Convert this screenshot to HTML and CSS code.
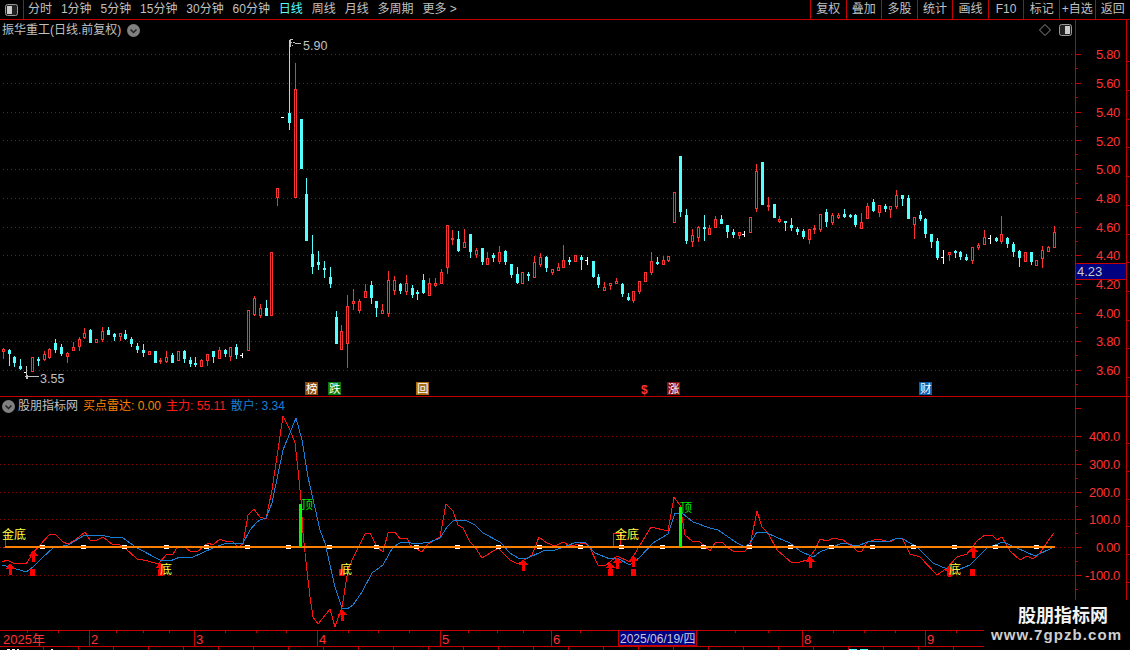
FILE: index.html
```html
<!DOCTYPE html>
<html lang="zh-CN">
<head>
<meta charset="utf-8">
<title>振华重工</title>
<link rel="stylesheet" href="styles.css">
</head>
<body>
<div class="app">
  <header class="toolbar">
    <div class="layout-btn"><svg class="panel-icon" width="13" height="12" viewBox="0 0 13 12"><rect x="0.5" y="0.5" width="12" height="11" rx="2" class="pi-frame"/><rect x="2" y="2" width="5" height="8" class="pi-fill"/></svg></div>
    <nav class="periods">
      <span>分时</span><span>1分钟</span><span>5分钟</span><span>15分钟</span><span>30分钟</span><span>60分钟</span><span class="active">日线</span><span>周线</span><span>月线</span><span>多周期</span><span>更多 &gt;</span>
    </nav>
    <div class="actions">
      <span>复权</span><span>叠加</span><span>多股</span><span>统计</span><span>画线</span><span>F10</span><span>标记</span><span>+自选</span><span>返回</span>
    </div>
  </header>

  <section class="pane pane-main">
    <div class="plot">
      <svg id="mainPlot" class="chart" width="1075" height="376" viewBox="0 20 1075 376">
        <g id="mainGrid"></g>
        <g id="candles"></g>
        <path class="hl-mark" d="M290.5 47V39.500H293M290.500 42.500H292M293 42l3 1.500 3-.5 2 1M291.500 45.500h1"/>
        <text class="hl-text" x="303" y="50">5.90</text>
        <path class="hl-mark" d="M26.500 366V378.500M26.500 376.500h12M28 375l-2 1.500 2 2"/>
        <text class="hl-text" x="40" y="383">3.55</text>
        <g class="tags">
          <rect x="305" y="382" width="13" height="13" class="tag-brown"/><text x="306" y="393">榜</text>
          <rect x="328" y="382" width="13" height="13" class="tag-green"/><text x="329" y="393">跌</text>
          <rect x="416" y="382" width="13" height="13" class="tag-amber"/><text x="417" y="393">回</text>
          <text x="641" y="394" class="tag-dollar">$</text>
          <rect x="667" y="382" width="13" height="13" class="tag-red"/><text x="668" y="393">涨</text>
          <rect x="919" y="382" width="13" height="13" class="tag-blue"/><text x="920" y="393">财</text>
        </g>
      </svg>
      <div class="pane-title">
        <span class="stock">振华重工(日线.前复权)</span>
        <svg class="chev" width="13" height="13" viewBox="0 0 13 13"><circle cx="6.500" cy="6.500" r="6.500"/><path d="M3.500 5.500l3 3 3-3"/></svg>
      </div>
      <div class="pane-tools">
        <svg class="diamond" width="12" height="12" viewBox="0 0 12 12"><path d="M6 .5L11.500 6 6 11.500 .5 6z"/></svg>
        <svg class="panel-icon" width="13" height="12" viewBox="0 0 13 12"><rect x="0.5" y="0.5" width="12" height="11" rx="2" class="pi-frame"/><rect x="6" y="2" width="5" height="8" class="pi-fill"/></svg>
      </div>
    </div>
    <svg id="mainAxis" class="axis" width="55" height="376" viewBox="1075 20 55 376">
      <g id="mainAxisMarks"></g>
      <g class="axis-labels">
        <text x="1120" y="59">5.80</text><text x="1120" y="88">5.60</text><text x="1120" y="117">5.40</text><text x="1120" y="146">5.20</text><text x="1120" y="174">5.00</text><text x="1120" y="203">4.80</text><text x="1120" y="232">4.60</text><text x="1120" y="260">4.40</text><text x="1120" y="289">4.20</text><text x="1120" y="318">4.00</text><text x="1120" y="346">3.80</text><text x="1120" y="375">3.60</text>
      </g>
      <rect x="1075.500" y="263.500" width="51" height="16" class="price-box"/>
      <text x="1077" y="276" class="price-text">4.23</text>
    </svg>
  </section>

  <section class="pane pane-sub">
    <div class="plot">
      <svg id="subPlot" class="chart" width="1075" height="233" viewBox="0 397 1075 233">
        <g id="subGrid"></g>
        <path class="stem" d="M5.500 533V547M3 547h3M613.500 547V533.500H620.500V547"/>
        <polyline id="redLine" class="line-red"/>
        <polyline id="blueLine" class="line-blue"/>
        <g id="zeroDashes"></g>
        <rect x="5" y="546" width="1050" height="2" class="zero-line"/>
        <rect x="299" y="504" width="3" height="43" class="top-bar"/>
        <rect x="679" y="507" width="3" height="40" class="top-bar"/>
        <g id="signals"></g>
        <g class="sig-labels">
          <text x="2" y="539">金底</text><text x="615" y="539">金底</text>
          <text x="160" y="574">底</text><text x="340" y="574">底</text><text x="949" y="574">底</text>
          <text x="301" y="509" class="sig-top">顶</text><text x="680" y="512" class="sig-top">顶</text>
        </g>
      </svg>
      <div class="pane-title sub-title">
        <svg class="chev" width="13" height="13" viewBox="0 0 13 13"><circle cx="6.500" cy="6.500" r="6.500"/><path d="M3.500 5.500l3 3 3-3"/></svg>
        <span class="stock">股朋指标网</span>
        <span class="v-orange">买点雷达: 0.00</span>
        <span class="v-red">主力: 55.11</span>
        <span class="v-blue">散户: 3.34</span>
      </div>
    </div>
    <svg id="subAxis" class="axis" width="55" height="233" viewBox="1075 397 55 233">
      <g id="subAxisMarks"></g>
      <g class="axis-labels">
        <text x="1120" y="441">400.0</text><text x="1120" y="469">300.0</text><text x="1120" y="497">200.0</text><text x="1120" y="524">100.0</text><text x="1120" y="552">0.00</text><text x="1120" y="580">-100.0</text>
      </g>
    </svg>
  </section>

  <svg id="dateAxis" class="date-axis" width="1130" height="20" viewBox="0 630 1130 20">
    <g id="dateMarks"></g>
    <g class="date-labels">
      <text x="3" y="644">2025年</text><text x="91" y="644">2</text><text x="196" y="644">3</text><text x="319" y="644">4</text><text x="442" y="644">5</text><text x="553" y="644">6</text><text x="804" y="644">8</text><text x="927" y="644">9</text>
    </g>
    <rect x="618.500" y="630.500" width="78" height="15" class="date-box"/>
    <text x="620" y="643" class="date-text">2025/06/19/四</text>
  </svg>

  <aside class="watermark">
    <div class="wm-name">股朋指标网</div>
    <div class="wm-url">www.7gpzb.com</div>
  </aside>
</div>
<script src="chart.js"></script>
</body>
</html>
```

FILE: styles.css
```css
* { box-sizing: border-box; }
html, body { margin: 0; padding: 0; background: #000; }
body {
  width: 1130px;
  height: 650px;
  overflow: hidden;
  font-family: "Liberation Sans", "Noto Sans CJK SC", sans-serif;
  font-size: 12px;
  color: #c0c0c0;
}
.app { position: relative; width: 1130px; height: 650px; display: flex; flex-direction: column; }

/* toolbar */
.toolbar {
  flex: none;
  height: 20px;
  display: flex;
  align-items: stretch;
  border-bottom: 1px solid #c40000;
  line-height: 19px;
}
.layout-btn {
  width: 24px;
  display: flex;
  align-items: center;
  padding-left: 5px;
  border-right: 1px solid #c40000;
}
.panel-icon { display: block; }
.pi-frame { fill: #222; stroke: #999; }
.pi-fill { fill: #ccc; }
.periods { display: flex; gap: 8.900px; padding-left: 4px; }
.periods .active { color: #54ffff; }
.actions { margin-left: auto; display: flex; width: 320px; }
.actions span {
  flex: 1 1 0;
  text-align: center;
  border-left: 1px solid #c40000;
  white-space: nowrap;
}

/* panes */
.pane { flex: none; display: flex; }
.pane-main { height: 377px; border-bottom: 1px solid #c40000; }
.pane-sub { height: 233px; }
.plot { position: relative; width: 1075px; height: 100%; }
.chart, .axis, .date-axis { display: block; flex: none; }
.chart text, .axis text, .date-axis text { font-family: "Liberation Sans", "Noto Sans CJK SC", sans-serif; }

.pane-title {
  position: absolute;
  left: 2px;
  top: 2px;
  display: flex;
  align-items: center;
  gap: 6px;
  line-height: 16px;
  white-space: nowrap;
}
.sub-title { left: 2px; top: 1px; gap: 3px; }
.sub-title span + span { margin-left: 2px; }
.chev circle { fill: #808080; }
.chev path { fill: none; stroke: #222; stroke-width: 1.500; }
.v-orange { color: #ff8000; }
.v-red { color: #ff1a1a; }
.v-blue { color: #1a7fd4; }
.pane-tools {
  position: absolute;
  right: 3px;
  top: 4px;
  display: flex;
  align-items: center;
  gap: 8px;
}
.diamond path { fill: none; stroke: #8a8a8a; }

/* main chart */
.dot-main { stroke: #b00000; stroke-width: 1; stroke-dasharray: 1 3; shape-rendering: crispEdges; }
.dot-sub { stroke: #8c0000; stroke-width: 1; stroke-dasharray: 1 3; shape-rendering: crispEdges; }
.c-cyan { fill: #54ffff; }
.c-red { fill: #ff3232; }
.c-white { fill: #fff; }
.c-hollow { fill: #000; stroke: #ff3232; stroke-width: 1; }
#candles rect { shape-rendering: crispEdges; }
.hl-mark { fill: none; stroke: #c0c0c0; stroke-width: 1; shape-rendering: crispEdges; }
.hl-text { fill: #c0c0c0; font-size: 12.500px; }
.tags text { fill: #fff; font-size: 11.500px; }
.tags .tag-dollar { fill: #ff3232; font-size: 12px; font-weight: 700; }
.tag-brown { fill: #8a4a10; }
.tag-green { fill: #0a7a0a; }
.tag-amber { fill: #a86a10; }
.tag-red { fill: #8a1010; }
.tag-blue { fill: #1060b0; }

/* axes */
.ax-line { fill: #c40000; shape-rendering: crispEdges; }
.axis-labels text { fill: #ff3232; font-size: 13px; text-anchor: end; letter-spacing: -0.300px; }
.price-box { fill: #000080; stroke: #c40000; shape-rendering: crispEdges; }
.price-text { fill: #c8c8c8; font-size: 13px; }

/* indicator */
.line-red, .line-blue { fill: none; stroke-width: 1; shape-rendering: crispEdges; }
.line-red { stroke: #ff1414; }
.line-blue { stroke: #1a7fd4; }
.stem { fill: none; stroke: #ff1414; shape-rendering: crispEdges; }
.zero-line { fill: #ff8000; shape-rendering: crispEdges; }
.z-dash { fill: #fff; shape-rendering: crispEdges; }
.top-bar { fill: #00ff00; shape-rendering: crispEdges; }
.sig { fill: #ff0000; shape-rendering: crispEdges; }
.sig-labels text { fill: #ffff40; font-size: 12px; }
.sig-labels .sig-top { fill: #00e800; }

/* date axis */
.date-labels text { fill: #ff3232; font-size: 13px; }
.date-box { fill: #000080; stroke: #c40000; shape-rendering: crispEdges; }
.date-text { fill: #c8c8dc; font-size: 12px; }

/* watermark */
.watermark {
  position: absolute;
  right: 0;
  bottom: 0;
  width: 146px;
  height: 50px;
  background: #000;
  padding-top: 3px;
}
.wm-name { padding-left: 34px; color: #f4f4f4; font-size: 18px; font-weight: 700; line-height: 23px; font-family: "Noto Sans CJK SC", sans-serif; }
.wm-url { padding-left: 7px; color: #cfcfcf; font-size: 15px; font-weight: 700; line-height: 18px; letter-spacing: 1.100px; white-space: nowrap; }
```

FILE: chart.js
```js
var NS = 'http://www.w3.org/2000/svg';
function el(parent, tag, attrs) {
  var n = document.createElementNS(NS, tag);
  for (var k in attrs) n.setAttribute(k, attrs[k]);
  document.getElementById(parent).appendChild(n);
  return n;
}
function box(parent, cls, x, y, w, h) {
  return el(parent, 'rect', { 'class': cls, x: x, y: y, width: w, height: h });
}

/* type hi top bottom lo, page pixels */
var bars = ('r 348 349 352 359,c 349 350 354 366,c 356 357 363 367,c 359 366 369 370,w 367 372 372 378,r 357 357 372 372,c 357 359 361 366,r 351 354 360 361,r 348 349 358 359,c 339 343 350 353,c 344 347 354 356,r 352 353 357 363,r 342 347 351 351,r 337 339 347 351,r 328 333 338 339,c 329 330 343 343,r 339 339 343 343,r 327 331 340 342,c 327 330 335 335,c 333 334 337 341,r 333 333 337 341,c 330 334 339 340,c 337 339 344 347,c 343 346 350 353,c 344 350 353 357,r 351 351 355 355,c 351 351 363 363,r 358 360 362 364,r 351 357 362 363,c 353 355 363 363,r 351 351 361 361,c 350 351 359 363,c 357 360 364 367,c 357 363 364 367,r 359 360 367 367,r 354 354 361 366,c 351 351 357 363,r 347 350 359 359,c 349 350 354 357,r 347 347 357 361,c 344 347 355 359,w 353 355 355 358,r 310 310 351 351,r 296 298 315 316,r 304 308 316 318,c 300 308 316 316,r 252 252 316 316,r 188 188 198 206,w 117 117 117 117,c 40 113 123 130,r 63 89 198 198,c 119 119 169 169,c 178 194 241 241,c 235 254 267 274,c 251 262 265 270,c 261 268 270 278,c 267 277 284 288,c 311 317 344 344,r 325 331 350 350,r 295 306 344 368,r 289 301 304 310,r 299 301 311 313,r 284 291 298 298,c 281 285 298 304,c 301 301 308 317,r 304 310 314 314,r 271 280 314 317,r 276 280 291 295,c 283 284 291 294,r 275 283 292 295,c 285 288 295 298,c 290 292 294 300,c 274 280 293 294,r 278 283 296 296,r 278 283 286 287,r 269 272 284 284,r 225 225 268 274,r 230 238 240 245,c 231 239 251 252,r 229 242 248 248,c 234 234 252 258,r 248 250 255 258,c 248 248 262 265,r 252 258 265 265,c 253 255 258 262,r 246 252 262 264,c 250 251 262 265,c 264 264 275 278,c 267 274 283 284,r 272 272 284 284,c 272 274 275 281,r 256 262 278 278,r 253 257 265 267,c 256 257 268 272,r 269 269 273 275,r 263 267 271 271,r 245 260 268 268,c 257 260 262 265,r 255 255 262 262,c 255 257 260 270,w 257 260 260 265,c 261 261 277 278,c 274 277 285 288,r 282 287 291 291,r 283 283 286 290,r 278 281 284 284,c 283 284 294 297,c 293 297 300 301,r 291 291 301 303,r 281 281 292 294,r 272 272 282 282,r 252 261 273 275,c 257 262 264 265,r 256 260 265 265,r 256 256 261 262,r 192 192 223 223,' +
'c 156 156 212 217,c 209 215 241 244,r 229 235 242 247,r 226 227 238 242,c 215 227 229 241,r 225 228 235 235,r 216 219 228 228,c 215 219 224 224,c 225 225 232 238,c 229 232 235 238,r 232 232 236 239,w 231 234 234 237,r 217 217 233 233,r 164 171 209 212,c 162 162 205 205,r 197 205 207 211,c 204 204 218 218,r 216 219 222 223,c 221 221 222 231,c 218 225 228 231,c 227 229 232 235,c 229 231 237 239,r 229 229 240 244,r 225 228 229 234,r 214 214 230 232,c 209 212 222 227,r 213 215 223 225,r 213 215 218 219,c 209 214 217 218,c 214 215 217 218,c 214 215 225 227,r 213 222 229 229,r 203 206 219 219,c 199 202 211 212,r 205 205 213 217,c 204 206 209 212,r 206 206 210 218,r 190 195 207 209,c 195 195 199 206,c 195 198 219 219,r 217 217 225 239,c 211 215 219 221,c 218 219 234 238,c 234 234 242 248,c 238 241 258 260,w 250 257 257 264,r 252 252 255 261,c 250 251 252 258,c 251 252 257 260,c 254 257 260 261,r 247 247 261 264,r 243 245 248 250,r 230 237 245 245,w 235 238 238 244,c 237 238 241 242,r 216 234 242 244,c 237 238 244 248,c 242 244 252 257,c 250 251 258 267,r 252 252 262 262,c 252 252 262 265,r 260 260 266 266,r 246 250 259 268,r 246 247 252 252,r 226 232 248 248').split(',');

bars.forEach(function (s, i) {
  var p = s.split(' ');
  var t = p[0], hi = +p[1], top = +p[2], bot = +p[3], lo = +p[4];
  var x = Math.round(2.7 + 5.84 * i);
  var wick = t === 'c' ? 'c-cyan' : t === 'w' ? 'c-white' : 'c-red';
  if (t === 'w') {
    if (lo > hi) box('candles', wick, x, hi, 1, lo - hi);
    box('candles', wick, x - 2, top, 3, 1);
    return;
  }
  if (top > hi) box('candles', wick, x, hi, 1, top - hi);
  if (lo > bot) box('candles', wick, x, bot, 1, lo - bot);
  if (t === 'c') {
    box('candles', 'c-cyan', x - 1, top, 3, Math.max(bot - top, 2));
  } else {
    box('candles', 'c-hollow', x - 0.5, top + 0.5, 2, Math.max(bot - top - 1, 1));
  }
});

/* grids and axis marks */
var axisRight = 1126;
[54, 83, 112, 140, 169, 198, 227, 255, 284, 313, 341, 370].forEach(function (y) {
  el('mainGrid', 'line', { 'class': 'dot-main', x1: 3, x2: 1075, y1: y + 0.5, y2: y + 0.5 });
  box('mainAxisMarks', 'ax-line', 1075, y, 6, 1);
  box('mainAxisMarks', 'ax-line', 1075, y + 14, 3, 1);
  box('mainAxisMarks', 'ax-line', 1127, y + 7, 3, 1);
});
box('mainAxisMarks', 'ax-line', 1075, 20, 1, 376);
box('mainAxisMarks', 'ax-line', axisRight, 20, 1, 376);

[436, 464, 492, 519, 547, 575].forEach(function (y) {
  el('subGrid', 'line', { 'class': 'dot-sub', x1: 0, x2: 1075, y1: y + 0.5, y2: y + 0.5 });
  box('subAxisMarks', 'ax-line', 1075, y, 6, 1);
  box('subAxisMarks', 'ax-line', 1075, y + 14, 3, 1);
  box('subAxisMarks', 'ax-line', 1127, y + 7, 3, 1);
});
box('subAxisMarks', 'ax-line', 1075, 408, 6, 1);
box('subAxisMarks', 'ax-line', 1075, 397, 1, 233);
box('subAxisMarks', 'ax-line', axisRight, 397, 1, 233);

/* indicator lines, page pixels */
document.getElementById('redLine').setAttribute('points',
  '2,562 7,560 13,563 26,564 33,553 40,545 50,534 55,534 63,542 68,544 75,540 85,532 90,540 97,540 103,537 113,545 118,544 125,548 137,559 148,561 158,564 167,554 173,554 178,546 183,546 190,551 197,552 208,543 213,545 220,539 227,542 232,541 238,547 243,544 248,515 254,509 260,517 266,519 272,490 283,416 290,430 295,443 298,470 301,500 303,533 306,562 310,597 313,617 318,624 330,609 335,627 342,607 348,570 353,558 358,548 365,534 370,533 377,547 383,552 388,533 395,532 400,539 407,538 410,545 422,552 428,544 440,537 446,504 453,511 458,525 463,528 470,542 475,547 482,558 498,548 510,560 518,564 532,555 539,537 547,543 555,546 563,542 570,546 585,543 590,548 598,565 605,566 617,556 630,562 637,550 651,527 668,531 674,497 680,505 685,535 692,541 700,542 710,551 715,543 722,542 728,548 735,552 745,551 750,545 757,511 762,527 768,533 777,550 792,563 800,562 807,560 815,550 820,539 827,541 833,538 843,540 853,547 857,551 862,551 867,542 878,539 890,542 897,538 902,538 910,554 920,557 937,575 947,568 957,557 967,554 977,541 985,535 992,535 997,540 1002,537 1010,551 1020,560 1027,556 1033,559 1040,553 1050,538 1054,533');
document.getElementById('blueLine').setAttribute('points',
  '2,565 10,567 26,572 33,567 43,557 53,548 68,545 85,535 100,535 110,537 123,538 137,548 160,560 170,561 180,557 193,557 213,548 227,543 243,543 250,530 257,522 260,520 266,518 272,503 283,450 296,418 302,440 308,477 320,530 325,543 335,587 342,608 347,609 353,605 362,592 372,573 383,565 393,547 400,543 405,542 417,544 430,542 440,538 447,527 453,521 465,520 475,525 483,533 500,542 510,553 518,558 528,558 543,551 555,550 577,542 585,542 595,553 610,559 617,558 630,565 640,557 653,543 668,534 675,513 682,513 693,522 710,528 718,530 737,543 745,547 750,543 757,532 765,532 778,538 790,543 800,551 813,557 820,552 832,547 843,543 857,546 868,542 890,541 897,538 903,539 917,547 933,563 947,569 960,569 970,565 987,548 1003,542 1017,548 1035,556 1054,547');

[43, 84, 125, 167, 207, 248, 289, 330, 377, 417, 458, 499, 540, 581, 622, 663, 704, 750, 791, 832, 873, 914, 955, 996, 1037].forEach(function (x) {
  box('zeroDashes', 'z-dash', x - 3, 545, 5, 4);
});

/* buy arrows and squares */
[[10, 563], [33, 550], [160, 562], [342, 609], [523, 559], [610, 562], [617, 557], [633, 555], [810, 556], [949, 565], [973, 546]].forEach(function (a) {
  var x = a[0], y = a[1];
  el('signals', 'polygon', { 'class': 'sig', points: [x, y, x + 5, y + 6, x + 2, y + 6, x + 2, y + 12, x - 1, y + 12, x - 1, y + 6, x - 4, y + 6].join(' ') });
});
[[30, 569], [158, 569], [339, 569], [608, 569], [631, 569], [947, 569], [970, 569]].forEach(function (s) {
  box('signals', 'sig', s[0], s[1], 5, 7);
});

/* date axis */
box('dateMarks', 'ax-line', 0, 630, 1130, 1);
box('dateMarks', 'ax-line', 0, 646, 1130, 1);
[89, 194, 317, 440, 551, 802, 925].forEach(function (x) { box('dateMarks', 'ax-line', x, 630, 1, 16); });
[27, 58, 116, 143, 169, 225, 256, 286, 348, 378, 409, 468, 497, 523, 580, 735, 768, 833, 864, 895, 956].forEach(function (x) { box('dateMarks', 'ax-line', x, 631, 1, 2); });
for (var bx = 43; bx < 1000; bx += 35) { box('dateMarks', 'ax-line', bx, 647, 1, 3); }
[[7, 3], [12, 3], [17, 2], [51, 2], [849, 8], [860, 8]].forEach(function (g, i) {
  box('dateMarks', i > 3 ? 'c-cyan' : 'c-white', g[0], 649, g[1], 1);
});
```
